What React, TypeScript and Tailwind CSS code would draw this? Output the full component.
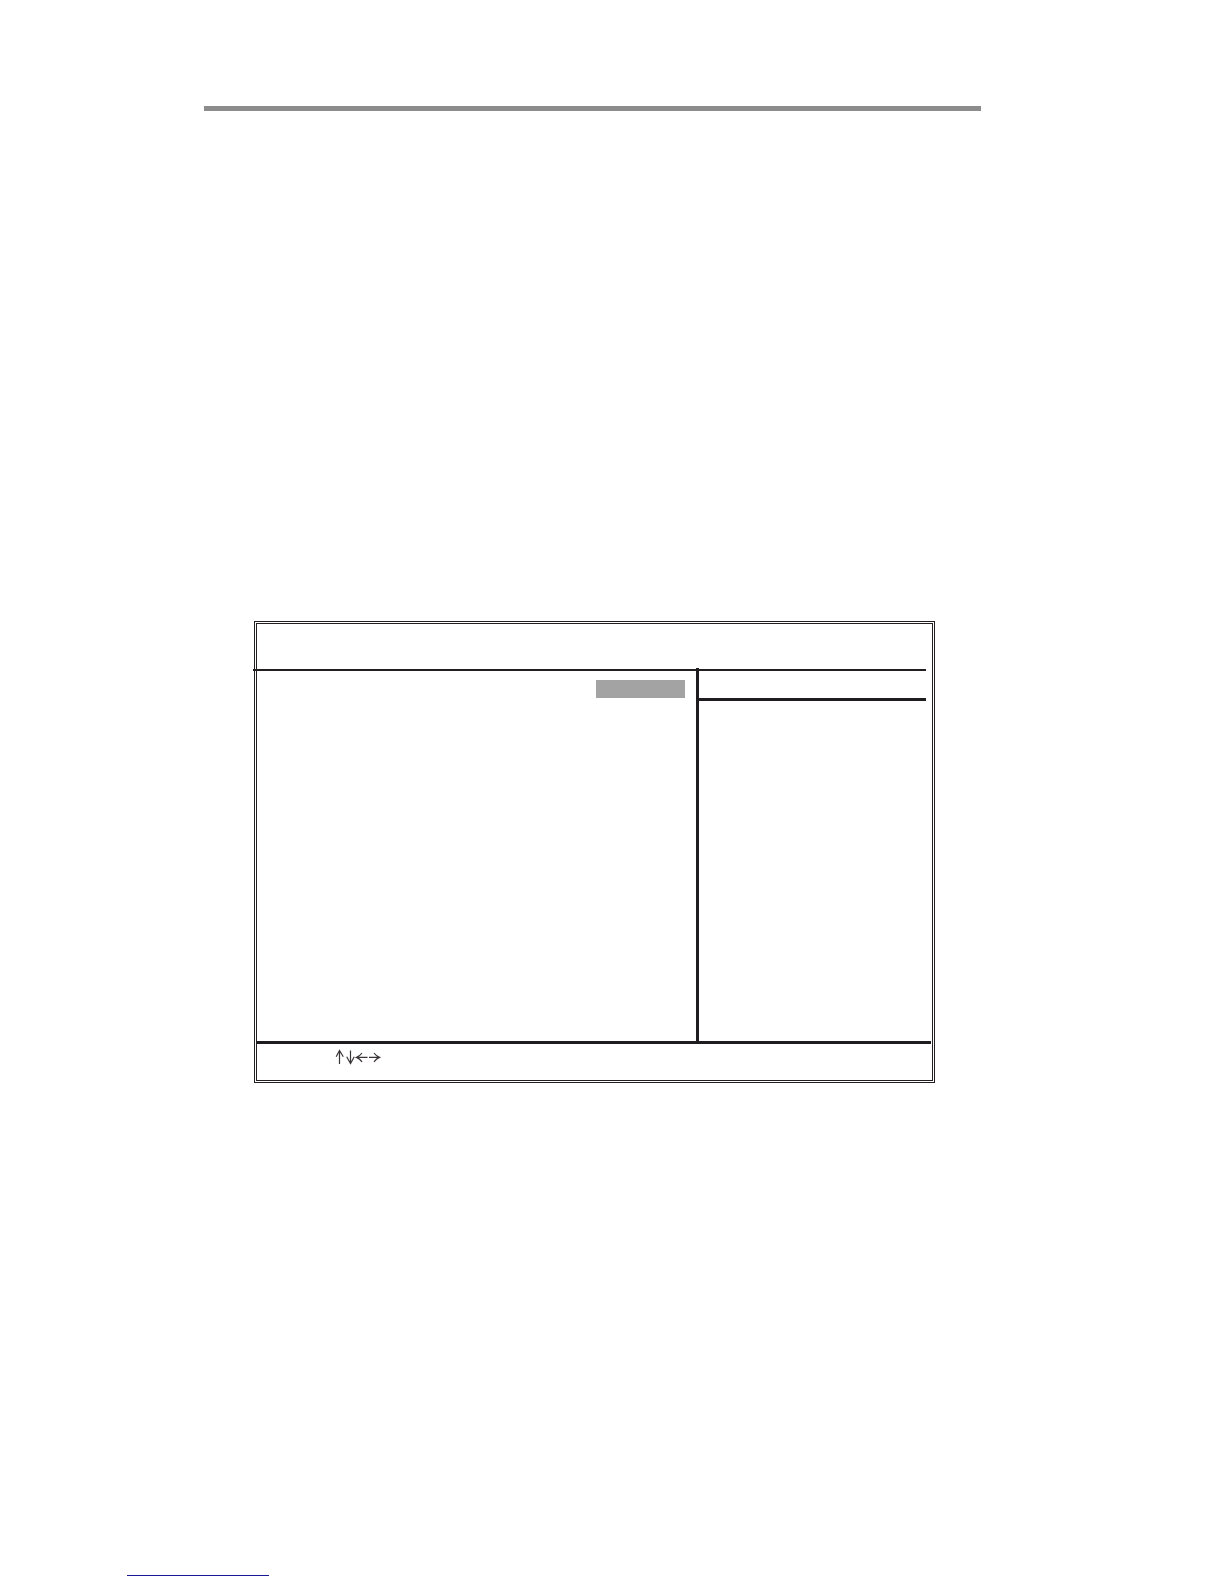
function ArrowKeys() {
  return (
    <svg
      role="img"
      aria-label="Arrow keys"
      className="block h-4 w-12"
      viewBox="0 0 48 16"
      fill="none"
      stroke="#3a3637"
      strokeWidth="1.2"
    >
      <path d="M4.5 15V1.5M1.2 7.8L4.5 1.5L8.3 7.8" />
      <path d="M15.5 1.5V15M11.7 7.8L15.5 14.5L19.3 7.8" />
      <path d="M32.5 8.4H21.5M27 4C25.4 6.2 23.8 7.5 21.5 8.4C23.8 9.3 25.4 10.6 27 12.8" />
      <path d="M34 8.4H44.5M39 4C40.6 6.2 42.2 7.5 44.5 8.4C42.2 9.3 40.6 10.6 39 12.8" />
    </svg>
  );
}

function SetupScreen() {
  return (
    <section className="ml-[50px] mr-[46px] border-[3px] border-double border-[#231f20]">
      <header className="-ml-1 mr-1.5 h-[47px] border-b-2 border-[#231f20]" />

      <div className="flex min-h-[370px]">
        <div className="flex flex-1 items-start justify-end pr-[11px] pt-[9px]">
          <div className="h-[18px] w-[89px] bg-[#a3a3a3]" />
        </div>
        <aside className="-mt-[3px] w-[35%] border-l-[3px] border-[#1f1c20]">
          <div className="mr-1.5 h-[33px] border-b-[3px] border-[#1f1c20]" />
        </aside>
      </div>

      <footer className="mr-px h-[39px] border-t-[3px] border-[#1f1c20] pl-[78px] pt-[5px]">
        <ArrowKeys />
      </footer>
    </section>
  );
}

export default function App() {
  return (
    <div className="flex min-h-screen flex-col bg-white font-['Liberation_Sans',sans-serif]">
      <main className="flex-1 pl-[204px] pr-[243px] pt-[106px]">
        <div className="mb-[510px] h-[5px] bg-[#8c8c8c]" />
        <SetupScreen />
      </main>
      <footer className="pb-2 pl-[127px]">
        <a href="#contents" aria-label="Contents" className="block h-px w-[142px] bg-[#1a1a96]" />
      </footer>
    </div>
  );
}
